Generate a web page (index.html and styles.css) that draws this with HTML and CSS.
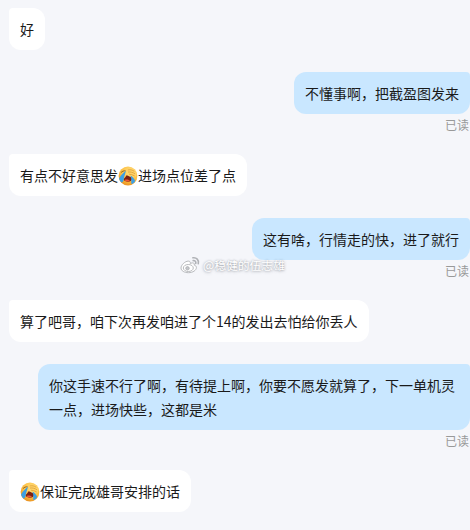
FILE: index.html
```html
<!DOCTYPE html>
<html lang="zh-CN">
<head>
    <meta charset="UTF-8">
    <meta name="viewport" content="width=device-width, initial-scale=1.0">
    <title>聊天</title>
    <link rel="stylesheet" href="styles.css">
</head>
<body>
    <!-- shared laughing-crying face -->
    <svg class="sprite" width="0" height="0">
        <defs>
            <radialGradient id="skin" cx="0.6" cy="0.3" r="0.75">
                <stop offset="0" stop-color="#ffe083"/>
                <stop offset="0.6" stop-color="#fdc043"/>
                <stop offset="1" stop-color="#e88d1c"/>
            </radialGradient>
        </defs>
        <symbol id="laugh-cry" viewBox="0 0 20 20">
            <circle cx="10" cy="10" r="9.4" fill="url(#skin)"/>
            <path d="M3.2 6.4c1-1.2 2.4-1.7 4-1.6" fill="none" stroke="#8a5a1e" stroke-width=".9" stroke-linecap="round"/>
            <path d="M8.6 9.2c1.8.5 4 1.6 5.6 3.2-.5 2.3-2.4 3.6-4.9 3.3-2.3-.3-3.8-1.4-3.7-2.7.9-.9 2-2.1 3-3.8z" fill="#7a2012"/>
            <path d="M6.6 13.9c1.6-.8 3.9-.4 5.4.8-1.5 1.3-4.3 1.1-5.4-.8z" fill="#ee5836"/>
            <path d="M7.9 4.8C6 6.2 3.2 8.6 1.1 12.4c.4 1.9 1.5 3.4 2.7 4.2 1.3-.5 1.7-1.9 1.9-3.4.3-2.7 1.6-5 2.2-8.4z" fill="#3c9fe4"/>
            <path d="M12.2 9.3c2.2 1.3 4.2 3.2 5 5.6-1 1.7-2.1 2.6-3.6 3.2-.9-2.2.6-4.9-1.4-8.8z" fill="#3c9fe4"/>
            <path d="M9 3.4c2.2-1.6 5.4-1.5 7.3.3 2 1.8 2.5 4.7 1.6 6.9-2.6.3-6-.9-8-3.2z" fill="#ffd368"/>
            <path d="M10.2 3.9c1.9-.5 4.1 0 5.8 1.2M10.4 6c2.2-.3 4.4.3 6.3 1.6M11.4 8.2c1.6.1 3.4.7 5 1.6" fill="none" stroke="#d79632" stroke-width=".7" stroke-linecap="round"/>
        </symbol>
    </svg>

    <div class="chat">
        <div class="message received">
            <div class="bubble">好</div>
        </div>

        <div class="message sent">
            <div class="bubble">不懂事啊，把截盈图发来</div>
            <div class="status">已读</div>
        </div>

        <div class="message received">
            <div class="bubble">有点不好意思发<svg class="emoji"><use href="#laugh-cry"/></svg>进场点位差了点</div>
        </div>

        <div class="message sent">
            <div class="bubble">这有啥，行情走的快，进了就行</div>
            <div class="status">已读</div>
        </div>

        <div class="message received">
            <div class="bubble">算了吧哥，咱下次再发咱进了个14的发出去怕给你丢人</div>
        </div>

        <div class="message sent">
            <div class="bubble">你这手速不行了啊，有待提上啊，你要不愿发就算了，下一单机灵一点，进场快些，这都是米</div>
            <div class="status">已读</div>
        </div>

        <div class="message received">
            <div class="bubble"><svg class="emoji"><use href="#laugh-cry"/></svg>保证完成雄哥安排的话</div>
        </div>
    </div>

    <div class="watermark">
        <svg class="weibo" viewBox="0 0 20 18">
            <path d="M8.2 5.1C5 5.2 1 9 1 12c0 2.8 3.4 4.7 7.4 4.7 4.6 0 8-2.6 8-5.1 0-1.5-1.1-2.2-2.2-2.5.6-2-.8-2.9-4-1.7.4-1.4-.4-2.4-2-2.3z"/>
            <ellipse cx="8.3" cy="12" rx="5" ry="3.5"/>
            <circle class="pupil" cx="7.5" cy="12.3" r="1.7"/>
            <path class="wave" d="M13.2 4.6c1.7-.3 3 1 2.6 2.8M12.9 1.8c3.6-.6 6.2 2.2 5.4 5.9"/>
        </svg>
        <span>@稳健的伍志雄</span>
    </div>
</body>
</html>
```
FILE: styles.css
```css
* {
    box-sizing: border-box;
}

body {
    margin: 0;
    height: 530px;
    overflow: hidden;
    position: relative;
    background: #f5f6fa;
    color: #1a1a1a;
    font-family: "Noto Sans CJK SC", sans-serif;
    font-size: 14px;
    line-height: 24px;
}

.sprite {
    position: absolute;
}

.chat {
    display: flex;
    flex-direction: column;
    gap: 22px;
    padding: 8px 0 0 9px;
}

.message {
    display: flex;
    flex-direction: column;
    align-items: flex-start;
}

.sent {
    align-items: flex-end;
}

.bubble {
    max-width: 432px;
    padding: 9px 11px;
    background: #ffffff;
    border-radius: 4px 12px 12px 12px;
}

.sent .bubble {
    background: #c9e7ff;
    border-radius: 12px 4px 12px 12px;
}

.status {
    height: 18px;
    margin-right: 1px;
    padding-top: 2px;
    color: #999999;
    font-size: 12px;
    line-height: 18px;
}

.emoji {
    display: inline-block;
    width: 20px;
    height: 20px;
    vertical-align: -3px;
    margin: -2px 0;
}

.watermark {
    position: absolute;
    left: 180px;
    top: 255px;
    display: flex;
    align-items: center;
    gap: 3px;
    color: #ffffff;
    font-size: 11.8px;
    line-height: 20px;
    text-shadow: 0 0 2px rgba(90, 95, 105, 0.5), 0 1px 3px rgba(90, 95, 105, 0.35);
}

.weibo {
    width: 20px;
    height: 18px;
    fill: #ffffff;
    stroke: #b0b2b6;
    stroke-width: 0.9;
}

.weibo .pupil {
    fill: #c4c6ca;
}

.weibo .wave {
    fill: none;
    stroke-width: 1.6;
    stroke-linecap: round;
}
```
